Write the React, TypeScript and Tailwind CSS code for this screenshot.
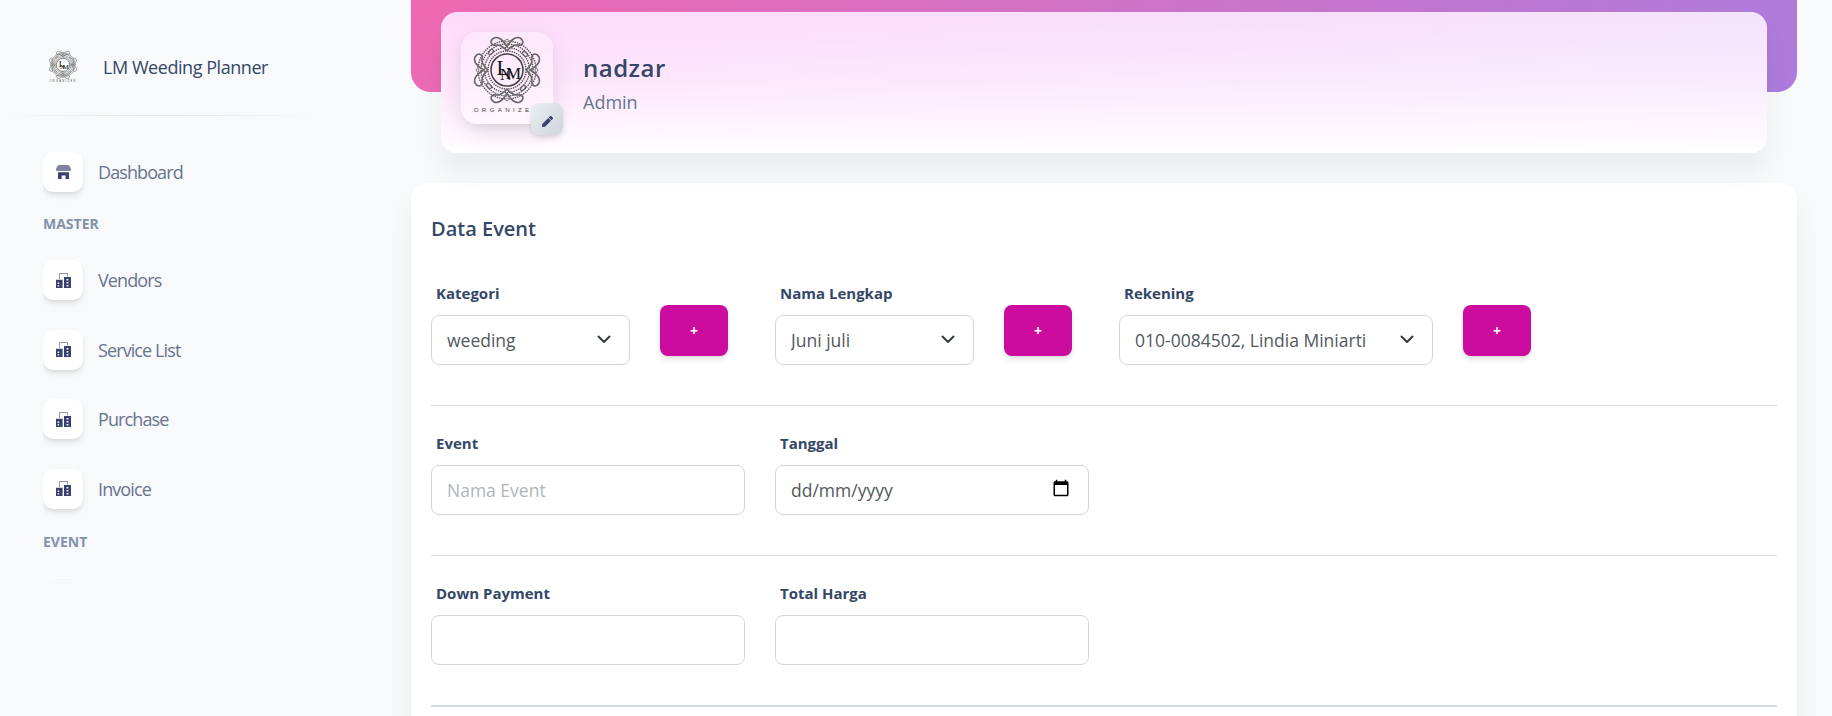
import { ReactNode } from 'react'
import { FaPen } from 'react-icons/fa'

const NAV_BOX =
  'flex h-10 w-10 shrink-0 items-center justify-center rounded-[10px] bg-white shadow-[0_4px_6px_-1px_rgba(0,0,0,0.1),0_2px_4px_-1px_rgba(0,0,0,0.06)]'

const StoreIcon = () => (
  <svg width="15" height="14" viewBox="0 0 15 14" fill="#3a416f">
    <path opacity="0.65" d="M2.5 0H12.5Q14 1 15 4V5Q15 6 13.5 6H1.5Q0 6 0 5V4Q1 1 2.5 0Z" />
    <path d="M2 7.3H13V14H9.6V10.4H5.6V14H2Z" />
  </svg>
)

const OfficeIcon = () => (
  <svg width="15" height="15" viewBox="0 0 15 15" fill="#3a416f">
    <path opacity="0.55" d="M3.5 6V.5H11.5V3.5" fill="none" stroke="#3a416f" />
    <path
      fillRule="evenodd"
      d="M0 6.7H6.6V15H0ZM1.6 9.6V11H3.2V9.6ZM1.6 12.2V13.6H3.2V12.2ZM8 4H15V15H8ZM10.6 6V7.4H12.4V6ZM10.6 9V10.4H12.4V9ZM10.6 12V13.4H12.4V12Z"
    />
  </svg>
)

// ornamen logo, satu sisi diputar empat kali
const Logo = ({ className }: { className: string }) => (
  <svg viewBox="0 0 72 84" className={className}>
    {[19, 22.5, 26, 29].map((r) => (
      <circle
        key={r}
        cx="36"
        cy="38"
        r={r}
        fill="none"
        stroke="#555"
        strokeWidth="1.5"
        strokeLinecap="round"
        strokeDasharray="0.1 2.2"
      />
    ))}
    {[0, 90, 180, 270].map((deg) => (
      <g key={deg} transform={`rotate(${deg} 36 38)`} fill="none" stroke="#666" strokeWidth="1.6">
        <path d="M36 15C33 9 28 4 23 6C18 9 20 14 25 13C28 12.5 33 15 36 19" />
        <path d="M36 15C39 9 44 4 49 6C54 9 52 14 47 13C44 12.5 39 15 36 19" />
        <path d="M33.5 9Q36 11 38.5 9Q36 5.5 33.5 9Z" strokeWidth="0.8" fill="#f3e6f3" />
        <ellipse cx="20" cy="20" rx="3" ry="1.8" transform="rotate(-45 20 20)" strokeWidth="1.3" fill="#f3e6f3" />
      </g>
    ))}
    <circle cx="36" cy="38" r="16" fill="none" stroke="#444" strokeWidth="1.6" />
    <g fontFamily="'Liberation Serif', serif" fill="#111">
      <text x="25.5" y="43" fontSize="21">L</text>
      <text x="29" y="47.5" fontSize="16">N</text>
      <text x="35" y="47" fontSize="17">M</text>
    </g>
    <text
      x="36"
      y="80"
      textAnchor="middle"
      fontFamily="'Liberation Sans', sans-serif"
      fontSize="6.2"
      letterSpacing="3.3"
      fill="#444"
    >
      ORGANIZER
    </text>
  </svg>
)

const NavItem = ({ icon, label }: { icon: ReactNode; label: string }) => (
  <div className="flex h-10 items-center gap-[15px]">
    <div className={NAV_BOX}>{icon}</div>
    <span className="text-lg tracking-[-0.05em] text-[#67748e]">{label}</span>
  </div>
)

const SectionLabel = ({ children }: { children: ReactNode }) => (
  <div className="text-[14px] leading-5 font-bold text-[#8392ab]">{children}</div>
)

const Sidebar = () => (
  <aside className="h-[716px] w-[411px] shrink-0">
    <div className="flex items-center pt-[49px] pl-[48px]">
      <Logo className="h-[35px] w-[30px]" />
      <span className="ml-[25px] text-lg font-medium tracking-[-0.025em] text-[#344767]">
        LM Weeding Planner
      </span>
    </div>
    <div className="mt-[31px] ml-[3px] h-px w-[310px] bg-[linear-gradient(90deg,transparent,rgba(0,0,0,0.1),transparent)]" />
    <nav className="mt-[36px] ml-[43px] flex h-[426px] flex-col overflow-hidden">
      <NavItem icon={<StoreIcon />} label="Dashboard" />
      <div className="mt-[22px] mb-[26px]">
        <SectionLabel>MASTER</SectionLabel>
      </div>
      <div className="flex flex-col gap-[29.5px]">
        <NavItem icon={<OfficeIcon />} label="Vendors" />
        <NavItem icon={<OfficeIcon />} label="Service List" />
        <NavItem icon={<OfficeIcon />} label="Purchase" />
        <NavItem icon={<OfficeIcon />} label="Invoice" />
      </div>
      <div className="mt-[23px] mb-[25px]">
        <SectionLabel>EVENT</SectionLabel>
      </div>
      <div className={NAV_BOX} />
    </nav>
  </aside>
)

const ProfileHeader = () => (
  <>
    <div className="h-[92px] rounded-b-[20px] bg-[linear-gradient(310deg,#7928ca,#ea0880)] opacity-60" />
    <div className="relative mx-[30px] -mt-[80px] flex h-[141px] items-start rounded-2xl bg-[linear-gradient(to_bottom,rgba(255,255,255,0)_0%,rgba(255,255,255,0.35)_50%,rgba(255,255,255,0.97)_100%),linear-gradient(90deg,#ffd9fb,#f4e2fd)] pt-[20px] pl-[20px] shadow-[inset_0_0_2px_rgba(254,254,254,0.82),0_20px_27px_0_rgba(0,0,0,0.05)]">
      <div className="relative flex h-[92px] w-[92px] shrink-0 justify-center rounded-2xl bg-white/30 shadow-[0_8px_26px_-4px_rgba(20,20,20,0.15),0_8px_9px_-5px_rgba(20,20,20,0.06)]">
        <Logo className="h-[84px] w-[72px]" />
        <div className="absolute -right-[10px] -bottom-[11px] flex h-8 w-8 items-center justify-center rounded-lg bg-[linear-gradient(310deg,#ced4da,#ebeff4)] shadow-[0_4px_7px_-1px_rgba(0,0,0,0.11),0_2px_4px_-1px_rgba(0,0,0,0.07)]">
          <FaPen className="mt-[4px] h-[11px] w-[11px] text-[#3a416f]" />
        </div>
      </div>
      <div className="mt-[21px] ml-[30px]">
        <div className="text-2xl leading-[30px] font-semibold tracking-[0.02em] text-[#344767]">nadzar</div>
        <div className="mt-[7px] text-lg leading-6 text-[#67748e]">Admin</div>
      </div>
    </div>
  </>
)

const Field = ({ label, width, children }: { label: string; width: string; children: ReactNode }) => (
  <div className={width}>
    <label className="mb-[11px] block h-[22px] pl-[5px] text-[15px] leading-[22px] font-bold text-[#344767]">
      {label}
    </label>
    {children}
  </div>
)

const INPUT =
  'block h-[50px] w-full rounded-lg border border-[#d2d6da] bg-white px-[15px] text-[17.5px] text-[#52585e] outline-none placeholder:text-[#adb5bd]'

const SelectBox = ({ value }: { value: string }) => (
  <div className="relative">
    <select className={`${INPUT} appearance-none`} defaultValue={value}>
      <option>{value}</option>
    </select>
    <svg
      className="pointer-events-none absolute top-[20px] right-[19px]"
      width="14"
      height="9"
      viewBox="0 0 14 9"
      fill="none"
      stroke="#343a40"
      strokeWidth="2"
      strokeLinecap="round"
      strokeLinejoin="round"
    >
      <path d="M1.5 1.5 7 7l5.5-5.5" />
    </svg>
  </div>
)

const DateBox = () => (
  <div className="relative">
    <input className={INPUT} defaultValue="dd/mm/yyyy" />
    <svg className="pointer-events-none absolute top-[14px] right-[19px]" width="18" height="18" viewBox="0 0 24 24" fill="#000">
      <path d="M20 3h-1V1h-2v2H7V1H5v2H4c-1.1 0-2 .9-2 2v16c0 1.1.9 2 2 2h16c1.1 0 2-.9 2-2V5c0-1.1-.9-2-2-2zm0 18H4V8h16v13z" />
    </svg>
  </div>
)

const AddButton = () => (
  <button className="flex h-[51px] w-[68px] items-center justify-center rounded-lg bg-[#cb0c9f] text-sm font-bold text-white shadow-[0_4px_7px_-1px_rgba(0,0,0,0.11),0_2px_4px_-1px_rgba(0,0,0,0.07)]">
    +
  </button>
)

const FormCard = () => (
  <section className="mt-[30px] rounded-2xl bg-white px-[20px] pt-[28px] pb-[40px] shadow-[0_20px_27px_0_rgba(0,0,0,0.05)]">
    <h6 className="text-xl leading-[36px] font-[550] text-[#344767]">Data Event</h6>
    <div className="flex items-end border-b border-[#dadde2] pt-[35px] pb-[40px]">
      <Field label="Kategori" width="w-[199px]">
        <SelectBox value="weeding" />
      </Field>
      <div className="mr-[47px] ml-[30px] pb-[9px]">
        <AddButton />
      </div>
      <Field label="Nama Lengkap" width="w-[199px]">
        <SelectBox value="Juni juli" />
      </Field>
      <div className="mr-[47px] ml-[30px] pb-[9px]">
        <AddButton />
      </div>
      <Field label="Rekening" width="w-[314px]">
        <SelectBox value="010-0084502, Lindia Miniarti" />
      </Field>
      <div className="ml-[30px] pb-[9px]">
        <AddButton />
      </div>
    </div>
    <div className="flex gap-[30px] border-b border-[#dadde2] pt-[26px] pb-[40px]">
      <Field label="Event" width="w-[314px]">
        <input className={INPUT} placeholder="Nama Event" />
      </Field>
      <Field label="Tanggal" width="w-[314px]">
        <DateBox />
      </Field>
    </div>
    <div className="flex gap-[30px] border-b-2 border-[#d5d9e4] pt-[26px] pb-[40px]">
      <Field label="Down Payment" width="w-[314px]">
        <input className={INPUT} />
      </Field>
      <Field label="Total Harga" width="w-[314px]">
        <input className={INPUT} />
      </Field>
    </div>
  </section>
)

export default function App() {
  return (
    <div className="flex h-[716px] overflow-hidden bg-[#f8f9fa] font-['Open_Sans',sans-serif]">
      <Sidebar />
      <main className="w-[1386px] shrink-0">
        <ProfileHeader />
        <FormCard />
      </main>
    </div>
  )
}
